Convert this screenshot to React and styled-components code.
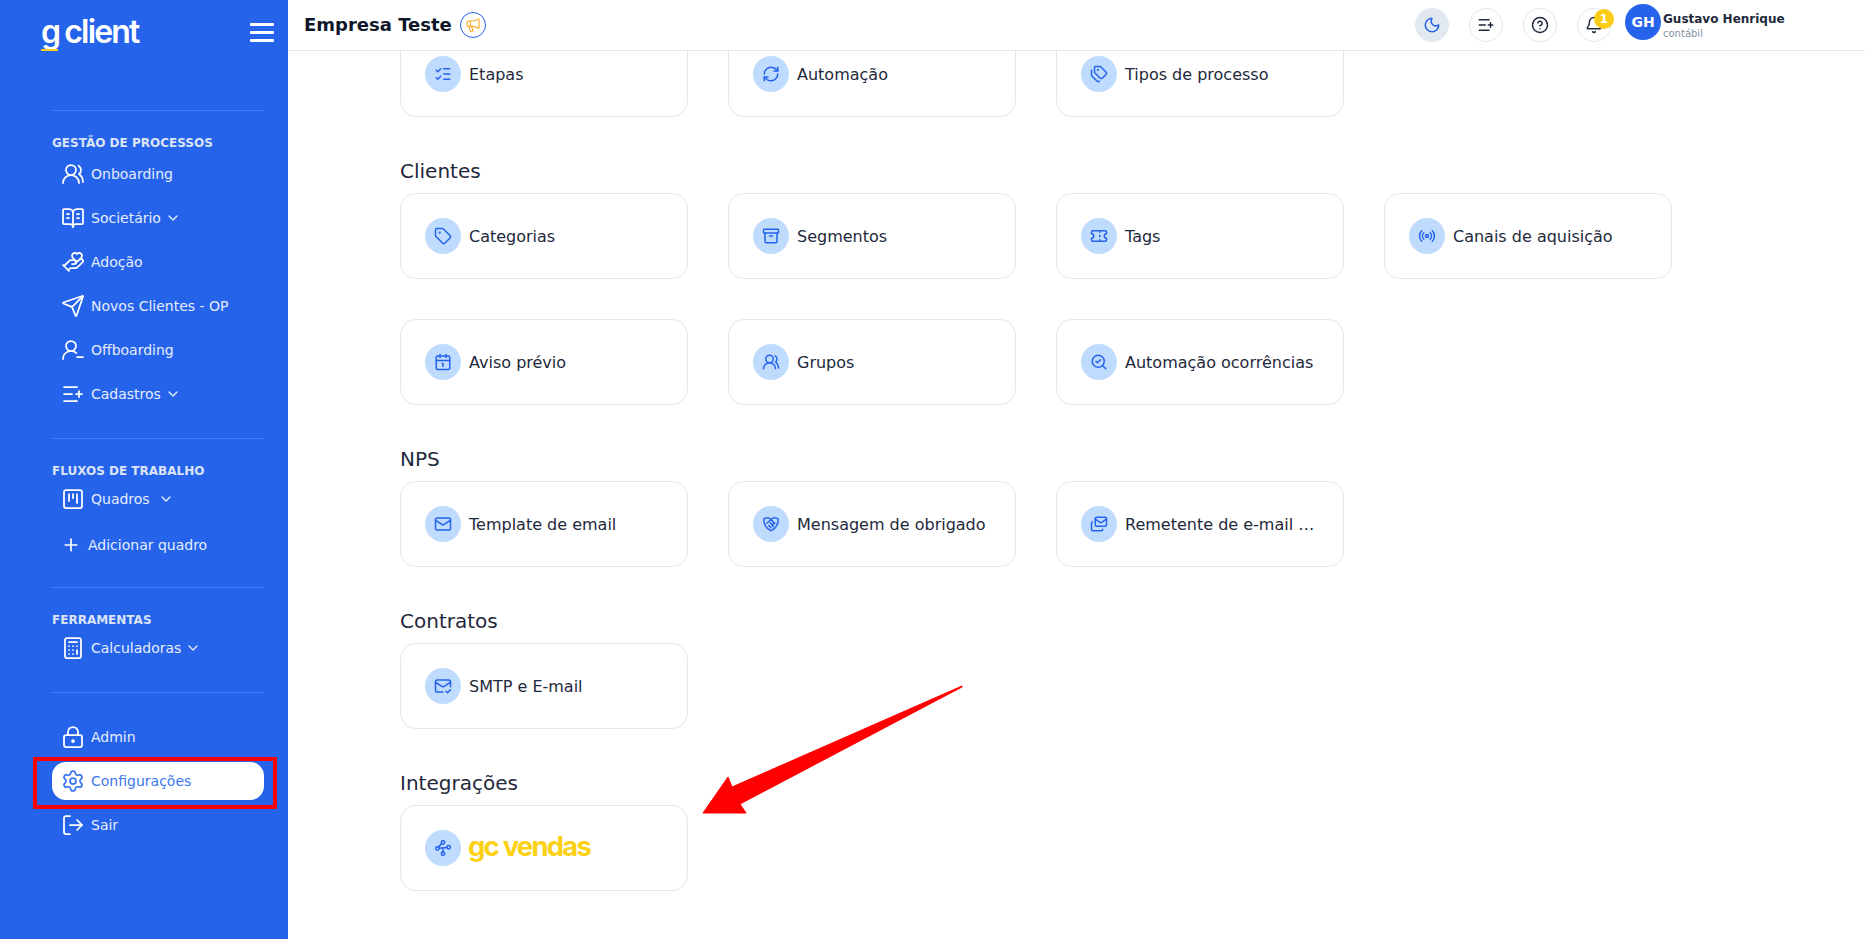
import React from 'react';
import styled, { createGlobalStyle } from 'styled-components';
import {
  UsersRound, BookOpenText, HandHeart, Send, UserRoundMinus, ListPlus, SquareKanban, Plus,
  Calculator, LockKeyhole, Settings, LogOut, ChevronDown, Moon, CircleHelp, Bell, Megaphone,
  ListChecks, RefreshCw, Tags, Tag, Archive, Ticket, Radio, Calendar1, SearchCheck, Mail,
  Mails, MailCheck,
} from 'lucide-react';

const ShieldHands = ({ size = 18 }) => (
  <svg width={size} height={size} viewBox="0 0 24 24" fill="none" stroke="currentColor" strokeWidth="2" strokeLinecap="round" strokeLinejoin="round">
    <path d="M2.500 5l5-1.500 4.500 2 4.500-2 5 1.500c.4 7-2 12.500-9.500 16-7.500-3.500-9.900-9-9.500-16z" />
    <path d="M6.500 11l5.500-5 5 5.500-3.500 1-2.500-2M9 14l3 3M13 13.500l2.500 2" />
  </svg>
);

const Nodes = ({ size = 18 }) => (
  <svg width={size} height={size} viewBox="0 0 24 24" fill="none" stroke="currentColor" strokeWidth="2" strokeLinecap="round" strokeLinejoin="round">
    <circle cx="12" cy="4.500" r="2.300" />
    <circle cx="4.500" cy="12.500" r="2.300" />
    <circle cx="19.500" cy="11" r="2.300" />
    <circle cx="12" cy="19.500" r="2.300" />
    <path d="M7 12.300l10-1M6 10.500l4.300-4.300M12 17l0-4" />
  </svg>
);

const sections = [
  { items: [
    { label: 'Etapas', icon: ListChecks },
    { label: 'Automação', icon: RefreshCw },
    { label: 'Tipos de processo', icon: Tags },
  ] },
  { title: 'Clientes', items: [
    { label: 'Categorias', icon: Tag },
    { label: 'Segmentos', icon: Archive },
    { label: 'Tags', icon: Ticket },
    { label: 'Canais de aquisição', icon: Radio },
    { label: 'Aviso prévio', icon: Calendar1 },
    { label: 'Grupos', icon: UsersRound },
    { label: 'Automação ocorrências', icon: SearchCheck },
  ] },
  { title: 'NPS', items: [
    { label: 'Template de email', icon: Mail },
    { label: 'Mensagem de obrigado', icon: ShieldHands },
    { label: 'Remetente de e-mail …', icon: Mails },
  ] },
  { title: 'Contratos', items: [{ label: 'SMTP e E-mail', icon: MailCheck }] },
];

const App = () => (
  <>
    <GlobalStyle />
    <Page>
      <Sidebar>
        <LogoRow>
          <Logo><LogoG>g</LogoG><span>client</span></Logo>
          <Burger><i /><i /><i /></Burger>
        </LogoRow>
        <Nav>
          <Divider />
          <GroupLabel>Gestão de processos</GroupLabel>
          <NavList $top={4}>
            <NavItem><UsersRound size={24} strokeWidth={1.75} /><span>Onboarding</span></NavItem>
            <NavItem><BookOpenText size={24} strokeWidth={1.75} /><span>Societário</span><Chevron size={16} /></NavItem>
            <NavItem><HandHeart size={24} strokeWidth={1.75} /><span>Adoção</span></NavItem>
            <NavItem><Send size={24} strokeWidth={1.75} /><span>Novos Clientes - OP</span></NavItem>
            <NavItem><UserRoundMinus size={24} strokeWidth={1.75} /><span>Offboarding</span></NavItem>
            <NavItem><ListPlus size={24} strokeWidth={1.75} /><span>Cadastros</span><Chevron size={16} /></NavItem>
          </NavList>
          <Divider $top={25} />
          <GroupLabel>Fluxos de trabalho</GroupLabel>
          <NavList $top={1}>
            <NavItem><SquareKanban size={24} strokeWidth={1.75} /><span>Quadros</span><Chevron size={16} $wide /></NavItem>
            <NavItem $add><Plus size={20} strokeWidth={2} /><span>Adicionar quadro</span></NavItem>
          </NavList>
          <Divider $top={23} />
          <GroupLabel>Ferramentas</GroupLabel>
          <NavList $top={1}>
            <NavItem><Calculator size={24} strokeWidth={1.75} /><span>Calculadoras</span><Chevron size={16} /></NavItem>
          </NavList>
          <Divider $top={25} />
          <NavList $top={25}>
            <NavItem><LockKeyhole size={24} strokeWidth={1.75} /><span>Admin</span></NavItem>
            <NavItem $active><Settings size={24} strokeWidth={1.75} /><span>Configurações</span></NavItem>
            <NavItem><LogOut size={24} strokeWidth={1.75} /><span>Sair</span></NavItem>
          </NavList>
        </Nav>
      </Sidebar>
      <Column>
        <Header>
          <CompanyName>Empresa Teste</CompanyName>
          <NoticeButton><Megaphone size={16} strokeWidth={1.75} /></NoticeButton>
          <HeaderActions>
            <RoundButton $filled><Moon size={18} /></RoundButton>
            <RoundButton><ListPlus size={18} /></RoundButton>
            <RoundButton><CircleHelp size={18} /></RoundButton>
            <RoundButton>
              <Bell size={18} />
              <Badge>1</Badge>
            </RoundButton>
          </HeaderActions>
          <Profile>
            <Avatar>GH</Avatar>
            <UserText>
              <UserName>Gustavo Henrique</UserName>
              <UserRole>contábil</UserRole>
            </UserText>
          </Profile>
        </Header>
        <Content>
          {sections.map((section, i) => (
            <section key={i}>
              {section.title && <SectionTitle>{section.title}</SectionTitle>}
              <CardGrid>
                {section.items.map(({ label, icon: Icon }) => (
                  <Card key={label}>
                    <IconCircle><Icon size={18} strokeWidth={2} /></IconCircle>
                    <CardLabel>{label}</CardLabel>
                  </Card>
                ))}
              </CardGrid>
            </section>
          ))}
          <section>
            <SectionTitle>Integrações</SectionTitle>
            <CardGrid>
              <Card>
                <IconCircle><Nodes /></IconCircle>
                <VendasLogo>gc vendas</VendasLogo>
              </Card>
            </CardGrid>
          </section>
        </Content>
      </Column>
      <RedBox />
      <Arrow viewBox="0 0 290 150">
        <path d="M272 11L42 112L38 102L13 138H56L50 129L272 12Z" fill="#ff0000" stroke="#ff0000" strokeWidth="1" strokeLinejoin="round" />
      </Arrow>
    </Page>
  </>
);

export default App;

const GlobalStyle = createGlobalStyle`
  html, body {
    margin: 0;
    height: 100%;
    overflow: hidden;
    background: #ffffff;
    font-family: "DejaVu Sans", sans-serif;
  }
`;

const Page = styled.div`
  position: relative;
  display: flex;
  height: 939px;
  overflow: hidden;
`;

const Sidebar = styled.aside`
  width: 288px;
  flex-shrink: 0;
  background-color: #2563eb;
  color: #e6edfc;
`;

const LogoRow = styled.div`
  display: flex;
  justify-content: space-between;
  align-items: center;
  height: 51px;
  padding: 13px 14px 0 41px;
  box-sizing: border-box;
`;

const Logo = styled.div`
  display: flex;
  gap: 5px;
  font-family: Inter, sans-serif;
  font-size: 32px;
  font-weight: 600;
  letter-spacing: -1.8px;
  line-height: 40px;
  color: #ffffff;
`;

const LogoG = styled.span`
  position: relative;
  &::after {
    content: '';
    position: absolute;
    left: 0;
    right: 1px;
    bottom: 1px;
    height: 2px;
    background: #facc15;
  }
`;

const Burger = styled.div`
  display: flex;
  flex-direction: column;
  gap: 5px;
  i {
    display: block;
    width: 24px;
    height: 3px;
    border-radius: 1px;
    background: #ffffff;
  }
`;

const Nav = styled.nav`
  margin: 59px 24px 0 52px;
`;

const Divider = styled.div`
  height: 1px;
  margin-top: ${(p) => p.$top || 0}px;
  background-color: #3b82f6;
`;

const GroupLabel = styled.div`
  margin-top: 24px;
  font-size: 12px;
  line-height: 16px;
  font-weight: 700;
  text-transform: uppercase;
  color: #dbe4f7;
`;

const NavList = styled.div`
  display: flex;
  flex-direction: column;
  gap: 6px;
  margin-top: ${(p) => p.$top}px;
`;

const NavItem = styled.div`
  display: flex;
  align-items: center;
  gap: ${(p) => (p.$add ? 7 : 6)}px;
  height: 38px;
  padding-left: 9px;
  margin-top: ${(p) => (p.$add ? 2 : 0)}px;
  border-radius: 14px;
  font-size: 14px;
  color: ${(p) => (p.$active ? '#3b78f0' : '#e6edfc')};
  background-color: ${(p) => (p.$active ? '#ffffff' : 'transparent')};
  svg:first-child {
    flex-shrink: 0;
    color: ${(p) => (p.$active ? '#3b78f0' : '#ffffff')};
  }
`;

const Chevron = styled(ChevronDown)`
  margin-left: ${(p) => (p.$wide ? 2 : -2)}px;
`;

const Column = styled.div`
  flex: 1;
  min-width: 0;
  display: flex;
  flex-direction: column;
`;

const Header = styled.header`
  position: relative;
  z-index: 1;
  display: flex;
  align-items: center;
  height: 51px;
  box-sizing: border-box;
  padding: 0 0 1px 16px;
  background: #ffffff;
  border-bottom: 1px solid #e2e8f0;
`;

const CompanyName = styled.div`
  font-size: 18px;
  font-weight: 700;
  color: #0f172a;
`;

const NoticeButton = styled.div`
  display: flex;
  align-items: center;
  justify-content: center;
  width: 26px;
  height: 26px;
  box-sizing: border-box;
  margin-left: 8px;
  border: 1px solid #2563eb;
  border-radius: 50%;
  color: #fbab24;
`;

const HeaderActions = styled.div`
  display: flex;
  gap: 20px;
  margin-left: auto;
`;

const RoundButton = styled.div`
  position: relative;
  display: flex;
  align-items: center;
  justify-content: center;
  width: 34px;
  height: 34px;
  box-sizing: border-box;
  border-radius: 50%;
  border: 1px solid #e2e8f0;
  background: ${(p) => (p.$filled ? '#e2e8f0' : '#ffffff')};
  color: ${(p) => (p.$filled ? '#2563eb' : '#1e293b')};
`;

const Badge = styled.span`
  position: absolute;
  top: 0;
  right: -4px;
  display: flex;
  align-items: center;
  justify-content: center;
  width: 20px;
  height: 20px;
  border-radius: 50%;
  background: #facc15;
  color: #ffffff;
  font-size: 12px;
  font-weight: 700;
`;

const Profile = styled.div`
  display: flex;
  align-items: center;
  gap: 2px;
  width: 240px;
  margin: -5px 0 0 14px;
`;

const Avatar = styled.div`
  display: flex;
  align-items: center;
  justify-content: center;
  width: 36px;
  height: 36px;
  border-radius: 50%;
  background: #2563eb;
  color: #ffffff;
  font-size: 14px;
  font-weight: 700;
`;

const UserText = styled.div`
  margin-top: 7px;
`;

const UserName = styled.div`
  font-size: 12px;
  line-height: 16px;
  font-weight: 700;
  color: #1e293b;
`;

const UserRole = styled.div`
  font-size: 10px;
  line-height: 14px;
  color: #8493a8;
`;

const Content = styled.main`
  flex: 1;
  min-height: 0;
  overflow: hidden;
  padding-left: 112px;
  margin-top: -20px;
  display: flex;
  flex-direction: column;
  gap: 40px;
`;

const SectionTitle = styled.h2`
  margin: 0 0 8px;
  font-size: 20px;
  line-height: 28px;
  font-weight: 400;
  color: #1e293b;
`;

const CardGrid = styled.div`
  display: grid;
  grid-template-columns: repeat(4, 288px);
  gap: 40px;
`;

const Card = styled.div`
  display: flex;
  align-items: center;
  gap: 8px;
  height: 86px;
  box-sizing: border-box;
  padding: 0 24px;
  background: #ffffff;
  border: 1px solid #e2e8f0;
  border-radius: 16px;
`;

const IconCircle = styled.div`
  display: flex;
  align-items: center;
  justify-content: center;
  flex-shrink: 0;
  width: 36px;
  height: 36px;
  border-radius: 50%;
  background: #bfdbfe;
  color: #2563eb;
`;

const CardLabel = styled.div`
  font-size: 16px;
  color: #1e293b;
  white-space: nowrap;
`;

const VendasLogo = styled.div`
  margin: -4px 0 0 -1px;
  font-family: Inter, sans-serif;
  font-size: 27.5px;
  font-weight: 700;
  letter-spacing: -1.8px;
  color: #fcd116;
`;

const RedBox = styled.div`
  position: absolute;
  left: 33px;
  top: 757px;
  width: 244px;
  height: 52px;
  box-sizing: border-box;
  border: 4px solid #ff0000;
  border-radius: 1px;
`;

const Arrow = styled.svg`
  position: absolute;
  left: 690px;
  top: 675px;
  width: 290px;
  height: 150px;
`;
